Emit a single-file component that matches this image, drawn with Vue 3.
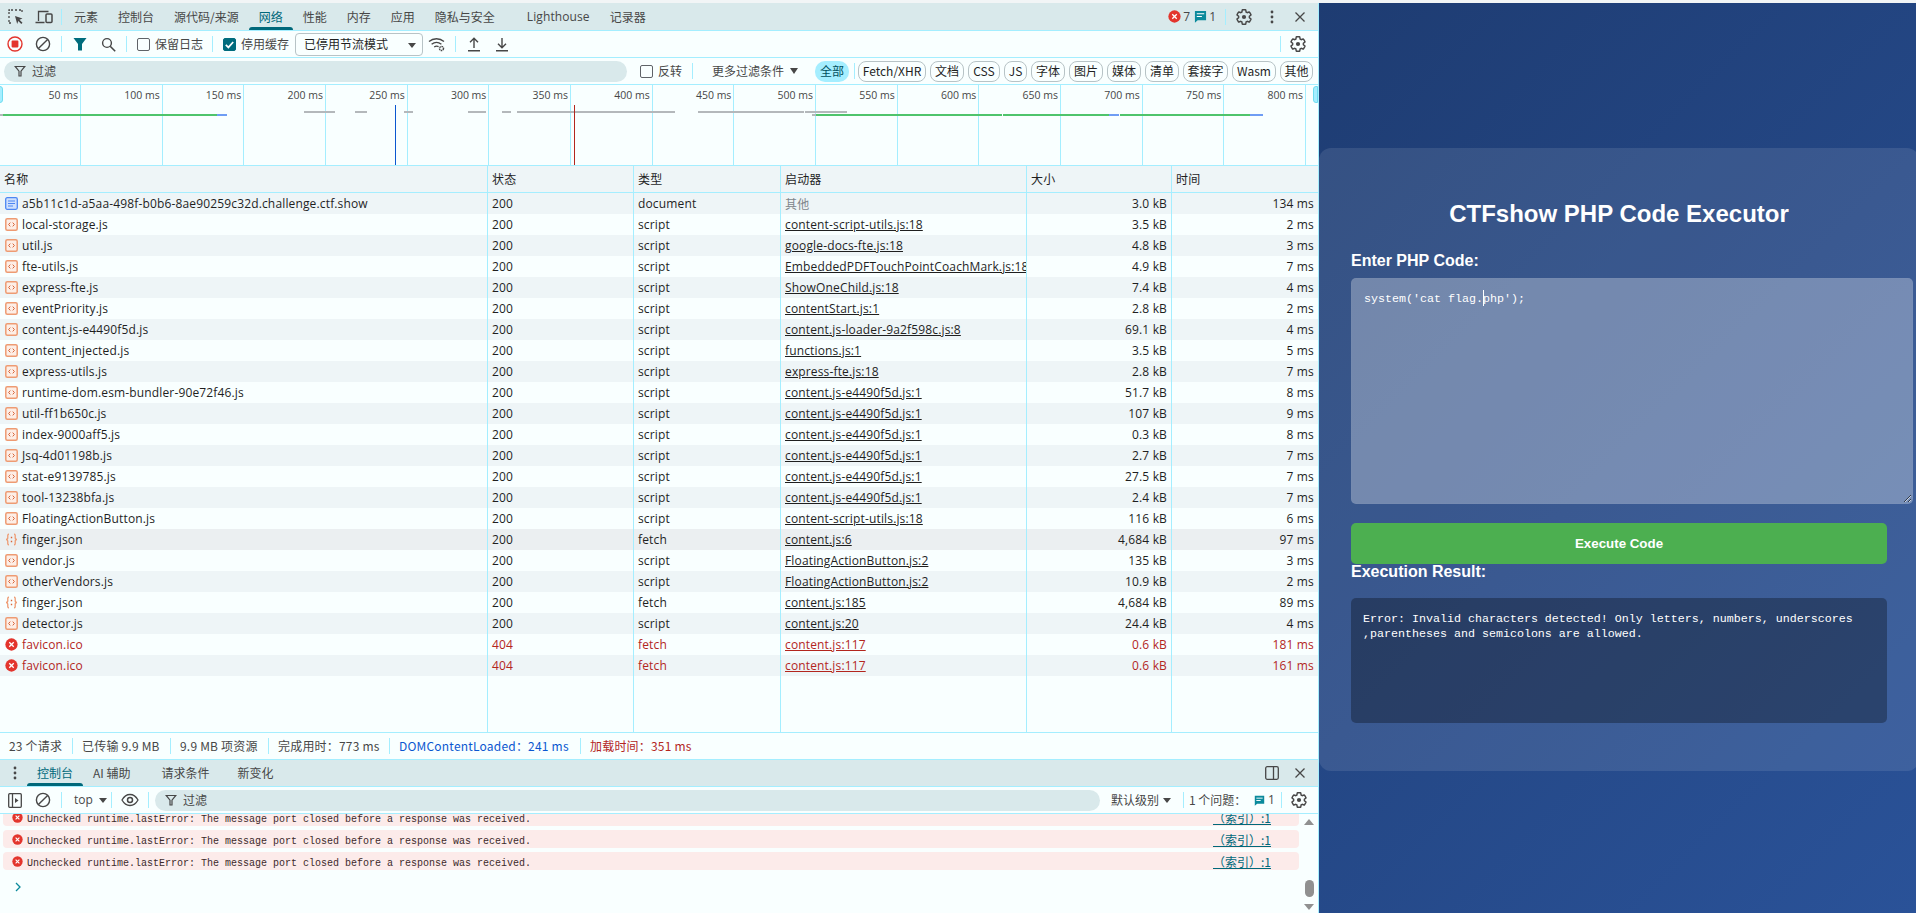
<script setup>
const tabs = ['元素', '控制台', '源代码/来源', '网络', '性能', '内存', '应用', '隐私与安全', 'Lighthouse', '记录器']
const chips = [
  ['Fetch/XHR', 68], ['文档', 34], ['CSS', 32], ['JS', 23], ['字体', 34], ['图片', 34],
  ['媒体', 34], ['清单', 34], ['套接字', 45], ['Wasm', 44], ['其他', 33]
]
const ticks = Array.from({ length: 16 }, (_, i) => ({ x: 80 + i * 81.67, label: `${(i + 1) * 50} ms` }))
const bars = [
  [304, 31, 111, 'g'], [355, 12, 111, 'g'], [404, 9, 111, 'g'], [468, 18, 111, 'g'], [502, 9, 111, 'g'],
  [517, 158, 111, 'g'], [698, 106, 111, 'g'], [805, 42, 111, 'g'],
  [0, 3, 114, 'g'], [3, 214, 114, 'e'], [217, 10, 114, 'b'],
  [812, 4, 114, 'g'], [816, 186, 114, 'e'], [1003, 106, 114, 'e'], [1109, 10, 114, 'b'],
  [1120, 130, 114, 'e'], [1250, 13, 114, 'b']
]
const I = 'content.js-e4490f5d.js:1'
const rows = [
  ['a5b11c1d-a5aa-498f-b0b6-8ae90259c32d.challenge.ctf.show', 'doc', '200', 'document', '其他', '3.0 kB', '134 ms'],
  ['local-storage.js', 'js', '200', 'script', 'content-script-utils.js:18', '3.5 kB', '2 ms'],
  ['util.js', 'js', '200', 'script', 'google-docs-fte.js:18', '4.8 kB', '3 ms'],
  ['fte-utils.js', 'js', '200', 'script', 'EmbeddedPDFTouchPointCoachMark.js:18', '4.9 kB', '7 ms'],
  ['express-fte.js', 'js', '200', 'script', 'ShowOneChild.js:18', '7.4 kB', '4 ms'],
  ['eventPriority.js', 'js', '200', 'script', 'contentStart.js:1', '2.8 kB', '2 ms'],
  ['content.js-e4490f5d.js', 'js', '200', 'script', 'content.js-loader-9a2f598c.js:8', '69.1 kB', '4 ms'],
  ['content_injected.js', 'js', '200', 'script', 'functions.js:1', '3.5 kB', '5 ms'],
  ['express-utils.js', 'js', '200', 'script', 'express-fte.js:18', '2.8 kB', '7 ms'],
  ['runtime-dom.esm-bundler-90e72f46.js', 'js', '200', 'script', I, '51.7 kB', '8 ms'],
  ['util-ff1b650c.js', 'js', '200', 'script', I, '107 kB', '9 ms'],
  ['index-9000aff5.js', 'js', '200', 'script', I, '0.3 kB', '8 ms'],
  ['Jsq-4d01198b.js', 'js', '200', 'script', I, '2.7 kB', '7 ms'],
  ['stat-e9139785.js', 'js', '200', 'script', I, '27.5 kB', '7 ms'],
  ['tool-13238bfa.js', 'js', '200', 'script', I, '2.4 kB', '7 ms'],
  ['FloatingActionButton.js', 'js', '200', 'script', 'content-script-utils.js:18', '116 kB', '6 ms'],
  ['finger.json', 'json', '200', 'fetch', 'content.js:6', '4,684 kB', '97 ms'],
  ['vendor.js', 'js', '200', 'script', 'FloatingActionButton.js:2', '135 kB', '3 ms'],
  ['otherVendors.js', 'js', '200', 'script', 'FloatingActionButton.js:2', '10.9 kB', '2 ms'],
  ['finger.json', 'json', '200', 'fetch', 'content.js:185', '4,684 kB', '89 ms'],
  ['detector.js', 'js', '200', 'script', 'content.js:20', '24.4 kB', '4 ms'],
  ['favicon.ico', 'err', '404', 'fetch', 'content.js:117', '0.6 kB', '181 ms'],
  ['favicon.ico', 'err', '404', 'fetch', 'content.js:117', '0.6 kB', '161 ms']
]
const heads = ['名称', '状态', '类型', '启动器', '大小', '时间']
const stats = [['23 个请求', 54, ''], ['已传输 9.9 MB', 79, ''], ['9.9 MB 项资源', 79, ''], ['完成用时：773 ms', 102, ''], ['DOMContentLoaded：241 ms', 172, 'dom'], ['加载时间：351 ms', 102, 'load']]
const logs = [1, 2, 3]
const gear = 'M19.14 12.94c.04-.3.06-.61.06-.94 0-.32-.02-.64-.07-.94l2.03-1.58c.18-.14.23-.41.12-.61l-1.92-3.32c-.12-.22-.37-.29-.59-.22l-2.39.96c-.5-.38-1.03-.7-1.62-.94l-.36-2.54c-.04-.24-.24-.41-.48-.41h-3.84c-.24 0-.43.17-.47.41l-.36 2.54c-.59.24-1.13.57-1.62.94l-2.39-.96c-.22-.08-.47 0-.59.22L2.74 8.87c-.12.21-.08.47.12.61l2.03 1.58c-.05.3-.09.63-.09.94s.02.64.07.94l-2.03 1.58c-.18.14-.23.41-.12.61l1.92 3.32c.12.22.37.29.59.22l2.39-.96c.5.38 1.03.7 1.62.94l.36 2.54c.05.24.24.41.48.41h3.84c.24 0 .44-.17.47-.41l.36-2.54c.59-.24 1.13-.56 1.62-.94l2.39.96c.22.08.47 0 .59-.22l1.92-3.32c.12-.22.07-.47-.12-.61l-2.01-1.58z'
</script>

<template>
  <div class="screen">
    <svg class="defs">
      <symbol id="gear" viewBox="0 0 24 24">
        <path :d="gear" fill="none" stroke="#474747" stroke-width="1.9" />
        <circle cx="12" cy="12" r="2.8" fill="#474747" />
      </symbol>
      <symbol id="close" viewBox="0 0 12 12">
        <path d="M1.5 1.5l9 9M10.5 1.5l-9 9" stroke="#474747" stroke-width="1.3" fill="none" />
      </symbol>
      <symbol id="err" viewBox="0 0 14 14">
        <circle cx="7" cy="7" r="6.6" fill="#e3352d" />
        <path d="M4.6 4.6l4.8 4.8M9.4 4.6l-4.8 4.8" stroke="#fff" stroke-width="1.4" />
      </symbol>
      <symbol id="msg" viewBox="0 0 14 14">
        <path d="M1 1h12v10H4l-3 2.6z" fill="#0b8a9c" />
        <path d="M3 4h8M3 7h5.5" stroke="#fff" stroke-width="1.2" />
      </symbol>
      <symbol id="clear" viewBox="0 0 16 16">
        <circle cx="8" cy="8" r="6.6" fill="none" stroke="#474747" stroke-width="1.4" />
        <path d="M12.6 3.4l-9.2 9.2" stroke="#474747" stroke-width="1.4" />
      </symbol>
      <symbol id="funnel" viewBox="0 0 12 12">
        <path d="M1.2 1.5h9.6L7 6.2V11H5V6.2z" fill="none" stroke="#474747" stroke-width="1.2" />
      </symbol>
    </svg>

    <div class="strip"></div>
    <div class="main">
      <section class="devtools">
        <header class="tabbar">
          <button class="ib first" aria-label="inspect">
            <svg width="16" height="16" viewBox="0 0 16 16">
              <path d="M1 5V1h4M7 1h2M11 1h3v3M1 7v2M1 11v3h3" fill="none" stroke="#474747" stroke-width="1.3" stroke-dasharray="2 1" />
              <path d="M7 7l7.5 2.6-3 1.1 3 3-1.2 1.2-3-3-1.1 3z" fill="#474747" />
            </svg>
          </button>
          <button class="ib device" aria-label="device">
            <svg width="18" height="16" viewBox="0 0 18 16">
              <path d="M3.5 12V2.5h10M0.5 13.5h9" fill="none" stroke="#474747" stroke-width="1.3" />
              <rect x="11" y="5" width="6" height="8.5" rx="1" fill="none" stroke="#474747" stroke-width="1.5" />
            </svg>
          </button>
          <span class="sep tabsep"></span>
          <span v-for="t in tabs" :key="t" class="tab" :class="{ active: t === '网络', spaced: t === 'Lighthouse' }">{{ t }}</span>
          <div class="tabright">
            <svg class="i12" width="13" height="13"><use href="#err" /></svg>
            <span class="count">7</span>
            <svg class="i12 msgi" width="13" height="13"><use href="#msg" /></svg>
            <span class="count">1</span>
            <span class="sep badge-sep"></span>
            <svg class="gear" width="18" height="18"><use href="#gear" /></svg>
            <svg class="dots" width="4" height="14" viewBox="0 0 4 14">
              <circle cx="2" cy="2" r="1.4" fill="#474747" /><circle cx="2" cy="7" r="1.4" fill="#474747" /><circle cx="2" cy="12" r="1.4" fill="#474747" />
            </svg>
            <svg class="closei" width="12" height="12"><use href="#close" /></svg>
          </div>
        </header>

        <div class="bar">
          <button class="ib" aria-label="record">
            <svg width="16" height="16" viewBox="0 0 16 16">
              <circle cx="8" cy="8" r="7" fill="none" stroke="#e3352d" stroke-width="1.4" />
              <rect x="4.6" y="4.6" width="6.8" height="6.8" rx=".8" fill="#e3352d" />
            </svg>
          </button>
          <button class="ib" aria-label="clear"><svg width="16" height="16"><use href="#clear" /></svg></button>
          <span class="sep"></span>
          <button class="ib" aria-label="filter">
            <svg width="14" height="14" viewBox="0 0 14 14"><path d="M.5 1h13L9 7v6.5H5V7z" fill="#006c7d" /></svg>
          </button>
          <button class="ib" aria-label="search">
            <svg width="15" height="15" viewBox="0 0 15 15">
              <circle cx="6" cy="6" r="4.4" fill="none" stroke="#474747" stroke-width="1.4" />
              <path d="M9.2 9.2l5 5" stroke="#474747" stroke-width="1.6" />
            </svg>
          </button>
          <span class="sep"></span>
          <label class="check cj"><span class="box"></span>保留日志</label>
          <span class="sep"></span>
          <label class="check cj"><span class="box on">
            <svg width="13" height="13" viewBox="0 0 13 13"><path d="M2.8 6.8l2.6 2.6 4.8-5.4" fill="none" stroke="#fff" stroke-width="1.7" /></svg>
          </span>停用缓存</label>
          <div class="select cj">已停用节流模式<span class="caret"></span></div>
          <button class="ib" aria-label="network conditions">
            <svg width="18" height="16" viewBox="0 0 18 16">
              <path d="M1 5.5C5.2 1.8 11.8 1.8 16 5.5M3.6 8.3c3-2.4 6.8-2.4 9.8 0M6.2 11c1.4-1 3-1.1 4.4-.4" fill="none" stroke="#474747" stroke-width="1.3" />
              <circle cx="13.5" cy="12.5" r="2" fill="none" stroke="#474747" stroke-width="1.5" stroke-dasharray="1.5 .6" />
            </svg>
          </button>
          <span class="sep"></span>
          <button class="ib" aria-label="import">
            <svg width="14" height="15" viewBox="0 0 14 15"><path d="M7 11V1.5M3 5.2l4-4 4 4M1 13.8h12" fill="none" stroke="#474747" stroke-width="1.4" /></svg>
          </button>
          <button class="ib" aria-label="export">
            <svg width="14" height="15" viewBox="0 0 14 15"><path d="M7 1v9.5M3 6.8l4 4 4-4M1 13.8h12" fill="none" stroke="#474747" stroke-width="1.4" /></svg>
          </button>
          <span class="sep push"></span>
          <button class="ib endgear" aria-label="settings"><svg width="18" height="18"><use href="#gear" /></svg></button>
        </div>

        <div class="bar filterbar">
          <div class="pill">
            <svg width="12" height="12"><use href="#funnel" /></svg>
            <span class="cj">过滤</span>
          </div>
          <label class="check cj invert"><span class="box"></span>反转</label>
          <span class="sep invsep"></span>
          <span class="more cj">更多过滤条件<span class="tri"></span></span>
          <span class="chip all cj">全部</span>
          <span class="sep chipsep"></span>
          <span v-for="c in chips" :key="c[0]" class="chip cj" :style="{ width: c[1] + 'px' }">{{ c[0] }}</span>
        </div>

        <div class="overview">
          <template v-for="t in ticks" :key="t.x">
            <i class="gridline" :style="{ left: t.x + 'px' }"></i>
            <span class="ticklabel" :style="{ left: t.x - 62 + 'px' }">{{ t.label }}</span>
          </template>
          <i v-for="(b, i) in bars" :key="i" class="ovbar" :class="b[3]" :style="{ left: b[0] + 'px', width: b[1] + 'px', top: b[2] - 85 + 'px' }"></i>
          <i class="vline blue"></i>
          <i class="vline red"></i>
          <i class="handle left"></i>
          <i class="handle right"></i>
        </div>

        <div class="grid head">
          <div v-for="h in heads" :key="h" class="cell cj">{{ h }}</div>
        </div>
        <div class="list">
          <div v-for="(r, i) in rows" :key="i" class="grid row" :class="{ alt: i % 2 === 0, failed: r[1] === 'err', hover: i === 16 }">
            <div class="cell name">
              <svg v-if="r[1] === 'doc'" class="ficon" width="13" height="13" viewBox="0 0 13 13">
                <rect x=".7" y=".7" width="11.6" height="11.6" rx="1.5" fill="#cfe0fd" stroke="#4d86f2" stroke-width="1.3" />
                <path d="M3 4h7M3 6.5h7M3 9h5" stroke="#4d86f2" stroke-width="1.1" />
              </svg>
              <svg v-else-if="r[1] === 'js'" class="ficon" width="13" height="13" viewBox="0 0 13 13">
                <rect x=".8" y=".8" width="11.4" height="11.4" rx="1.5" fill="#fdeee6" stroke="#ee9b73" stroke-width="1.5" />
                <path d="M5.3 4.6L3.6 6.5l1.7 1.9M7.7 4.6l1.7 1.9-1.7 1.9" fill="none" stroke="#d9663a" stroke-width="1" />
              </svg>
              <svg v-else-if="r[1] === 'json'" class="ficon" width="13" height="13" viewBox="0 0 13 13">
                <path d="M4 1.2C2.4 1.2 2.8 3 2.8 4.500 2.800 5.600 2 6.500 1 6.500c1 0 1.800.9 1.800 2 0 1.500-.4 3.300 1.200 3.300M9 1.200c1.600 0 1.200 1.800 1.200 3.300 0 1.100.8 2 1.800 2-1 0-1.800.9-1.800 2 0 1.500.4 3.300-1.200 3.300" fill="none" stroke="#ee9b73" stroke-width="1.300" />
                <path d="M6.500 3.800v1.500M6.500 7.700v1.500" stroke="#d9663a" stroke-width="1.400" />
              </svg>
              <svg v-else class="ficon" width="13" height="13"><use href="#err" /></svg>
              <span>{{ r[0] }}</span>
            </div>
            <div class="cell">{{ r[2] }}</div>
            <div class="cell">{{ r[3] }}</div>
            <div class="cell init" :class="{ other: r[4] === '其他', cj: r[4] === '其他' }">{{ r[4] }}</div>
            <div class="cell num">{{ r[5] }}</div>
            <div class="cell num">{{ r[6] }}</div>
          </div>
          <div class="grid filler"><div v-for="h in heads" :key="h" class="cell"></div></div>
        </div>

        <div class="status cj">
          <template v-for="(s, i) in stats" :key="s[0]">
            <span v-if="i" class="sep"></span>
            <span class="stat" :class="s[2]" :style="{ width: s[1] + 'px' }">{{ s[0] }}</span>
          </template>
        </div>

        <div class="ctabs cj">
          <button class="ib" aria-label="more">
            <svg width="4" height="14" viewBox="0 0 4 14">
              <circle cx="2" cy="2" r="1.4" fill="#474747" /><circle cx="2" cy="7" r="1.4" fill="#474747" /><circle cx="2" cy="12" r="1.4" fill="#474747" />
            </svg>
          </button>
          <span class="tab active">控制台</span>
          <span class="tab">AI 辅助</span>
          <span class="tab">请求条件</span>
          <span class="tab">新变化</span>
          <svg class="cpanel" width="14" height="14" viewBox="0 0 14 14">
            <rect x=".7" y=".7" width="12.600" height="12.600" rx="1.500" fill="none" stroke="#474747" stroke-width="1.300" />
            <path d="M8.500 1v12" stroke="#474747" stroke-width="1.300" />
          </svg>
          <svg class="closei" width="12" height="12"><use href="#close" /></svg>
        </div>

        <div class="bar ctool cj">
          <button class="ib" aria-label="sidebar">
            <svg width="14" height="15" viewBox="0 0 14 15">
              <rect x=".7" y=".7" width="12.600" height="13.600" rx="1" fill="none" stroke="#474747" stroke-width="1.300" />
              <path d="M4.500 1v13" stroke="#474747" stroke-width="1.300" /><path d="M7 5l3.500 2.500L7 10z" fill="#474747" />
            </svg>
          </button>
          <button class="ib" aria-label="clear"><svg width="16" height="16"><use href="#clear" /></svg></button>
          <span class="sep"></span>
          <span class="ctx">top<span class="tri small"></span></span>
          <span class="sep"></span>
          <button class="ib eye" aria-label="live expression">
            <svg width="18" height="14" viewBox="0 0 18 14">
              <path d="M1 7c2-3.600 4.800-5.500 8-5.500s6 1.900 8 5.500c-2 3.600-4.800 5.500-8 5.500S3 10.600 1 7z" fill="none" stroke="#474747" stroke-width="1.300" />
              <circle cx="9" cy="7" r="2.500" fill="none" stroke="#474747" stroke-width="1.500" />
            </svg>
          </button>
          <span class="sep"></span>
          <div class="pill cpill">
            <svg width="12" height="12"><use href="#funnel" /></svg>
            <span>过滤</span>
          </div>
          <span class="level">默认级别<span class="tri small"></span></span>
          <span class="sep lvsep"></span>
          <span class="issues">1 个问题：</span>
          <svg class="i12 imsg" width="11" height="11"><use href="#msg" /></svg>
          <span class="count">1</span>
          <span class="sep issep"></span>
          <svg class="gear" width="18" height="18"><use href="#gear" /></svg>
        </div>

        <div class="console">
          <div class="logs">
            <div v-for="l in logs" :key="l" class="log">
              <svg width="11" height="11"><use href="#err" /></svg>
              <span class="logtext">Unchecked runtime.lastError: The message port closed before a response was received.</span>
              <a class="src cj">（索引）:1</a>
            </div>
            <svg class="prompt" width="8" height="10" viewBox="0 0 8 10"><path d="M2 1l4 4-4 4" fill="none" stroke="#0b8a9c" stroke-width="1.300" /></svg>
          </div>
          <div class="scroll">
            <i class="arrow up"></i>
            <i class="thumb"></i>
            <i class="arrow down"></i>
          </div>
        </div>
      </section>

      <section class="page">
        <div class="card">
          <h1>CTFshow PHP Code Executor</h1>
          <label class="lbl" for="code">Enter PHP Code:</label>
          <div class="editor">
            <textarea id="code" class="code" spellcheck="false">system('cat flag.php');</textarea>
            <i class="cursor"></i>
          </div>
          <button class="run">Execute Code</button>
          <h3 class="lbl result-title">Execution Result:</h3>
          <div class="result">Error: Invalid characters detected! Only letters, numbers, underscores ,parentheses and semicolons are allowed.</div>
        </div>
      </section>
    </div>
  </div>
</template>

<style>
html, body { margin: 0; overflow: hidden; }
</style>

<style scoped>
.screen { width: 1916px; height: 913px; overflow: hidden; font: 12px/16px "Open Sans", "Noto Sans CJK SC", sans-serif; color: #1f1f1f; }
.defs { display: none; }
.strip { height: 3px; background: #f2f5f6; }
.main { display: flex; height: 910px; }
button { border: 0; background: none; padding: 0; font: inherit; color: inherit; }
.cj { font-family: "Noto Sans CJK SC", "Open Sans", sans-serif; }

.devtools { width: 1319px; height: 910px; flex: none; box-sizing: border-box; border-right: 1px solid #a5eeff; background: #f9ffff; display: flex; flex-direction: column; }
.ib { width: 28px; height: 26px; flex: none; display: flex; align-items: center; justify-content: center; }
.sep { width: 1px; height: 16px; background: #a5eeff; margin: 0 4px; flex: none; }

.tabbar { height: 28px; flex: none; box-sizing: border-box; border-bottom: 1px solid #a5eeff; background: #d9e9eb; display: flex; align-items: stretch; font-family: "Noto Sans CJK SC", "Open Sans", sans-serif; color: #474747; }
.tabbar .ib { align-self: center; }
.tabbar .first { width: 29px; margin-left: 1px; }
.tabbar .device { width: 27px; }
.tabsep { align-self: center; margin: 0 2px 0 4px; }
.tab { padding: 0 10px; display: flex; align-items: center; position: relative; white-space: nowrap; }
.tab.spaced { margin-left: 12px; font-family: "Open Sans", sans-serif; letter-spacing: .1px; }
.tab.active { color: #00687a; }
.tab.active::after { content: ""; position: absolute; left: 0; right: 0; bottom: 0; height: 3px; border-radius: 3px 3px 0 0; background: #00687a; }
.tabright { margin-left: auto; display: flex; align-items: center; }
.i12 { flex: none; }
.count { margin-left: 2px; font-family: "Open Sans", sans-serif; color: #474747; }
.msgi { margin-left: 4px; }
.badge-sep { margin: 0 9px; }
.dots { margin-left: 17px; }
.closei { margin: 0 12px 0 20px; }

.bar { height: 27px; flex: none; box-sizing: border-box; border-bottom: 1px solid #a5eeff; display: flex; align-items: center; padding-left: 1px; }
.check { display: flex; align-items: center; gap: 5px; margin: 0 5px 0 6px; color: #474747; line-height: 16px; }
.box { width: 13px; height: 13px; box-sizing: border-box; border: 1px solid #5f6368; border-radius: 2px; flex: none; display: block; }
.box.on { background: #006c7d; border-color: #006c7d; }
.box.on svg { display: block; margin: -1px; }
.select { width: 128px; height: 23px; box-sizing: border-box; margin-left: 1px; padding-left: 8px; border: 1px solid #b7c3c6; border-radius: 4px; display: flex; align-items: center; position: relative; color: #1f1f1f; }
.caret { position: absolute; right: 6px; top: 9px; border: 4px solid transparent; border-top: 5px solid #474747; border-bottom: 0; }
.push { margin-left: auto; margin-right: 3px; }
.endgear { margin-right: 6px; }

.filterbar { padding-left: 4px; }
.pill { height: 21px; border-radius: 11px; background: #d9e9eb; display: flex; align-items: center; gap: 6px; box-sizing: border-box; color: #474747; }
.filterbar .pill { width: 623px; padding-left: 10px; }
.invert { margin: 0 0 0 13px; }
.invsep { margin: 0 19px 0 10px; }
.more { color: #474747; display: flex; align-items: center; width: 103px; flex: none; }
.tri { display: inline-block; border: 4px solid transparent; border-top: 6px solid #474747; border-bottom: 0; margin-left: 6px; }
.tri.small { margin-left: 6px; border-width: 5px 4px 0; border-top-color: #474747; }
.chip { height: 21px; box-sizing: border-box; border: 1px solid #b7c3c6; border-radius: 8px; display: flex; align-items: center; justify-content: center; margin-right: 4px; flex: none; white-space: nowrap; color: #1f1f1f; }
.chip.all { width: 34px; margin-right: 0; border: 0; background: #a5eeff; border-radius: 10px; color: #00505e; }
.chipsep { margin: 0 3px 0 5px; }

.overview { height: 81px; flex: none; box-sizing: border-box; border-bottom: 1px solid #a5eeff; position: relative; overflow: hidden; }
.gridline { position: absolute; top: 0; bottom: 0; width: 1px; background: #a5eeff; }
.ticklabel { position: absolute; top: 2px; width: 60px; text-align: right; font-size: 10.5px; line-height: 16px; color: #474747; }
.ovbar { position: absolute; height: 2px; }
.ovbar.g { background: #b4b8bb; }
.ovbar.e { background: #4fc46c; }
.ovbar.b { background: #6f9df4; }
.vline { position: absolute; top: 20px; bottom: 0; width: 1px; }
.vline.blue { left: 395px; background: #0b57d0; }
.vline.red { left: 574px; background: #b3261e; }
.handle { position: absolute; top: 1px; height: 17px; width: 5px; background: #a5eeff; border: 1px solid #6fdcf0; box-sizing: border-box; }
.handle.left { left: -2px; border-radius: 0 3px 3px 0; }
.handle.right { left: 1313px; border-radius: 3px 0 0 3px; }

.grid { display: grid; grid-template-columns: 487px 146px 147px 246px 145px 147px; flex: none; }
.cell { box-sizing: border-box; padding: 0 4px; border-left: 1px solid #a5eeff; overflow: hidden; white-space: nowrap; display: flex; align-items: center; letter-spacing: .15px; }
.cell:first-child { border-left: 0; padding-left: 4px; }
.head { height: 27px; box-sizing: border-box; border-bottom: 1px solid #a5eeff; background: #eef5f7; }
.list { flex: 1; display: flex; flex-direction: column; min-height: 0; }
.row { height: 21px; }
.row.alt { background: #eef5f7; }
.row.hover { background: #ebeff1; }
.row.failed { color: #b3261e; }
.name { padding-left: 5px !important; gap: 4px; }
.ficon { flex: none; }
.init { display: block; line-height: 21px; text-decoration: underline; }
.init.other { text-decoration: none; color: #80868b; }
.num { justify-content: flex-end; }
.filler { flex: 1; }

.status { height: 28px; flex: none; box-sizing: border-box; border-top: 1px solid #a5eeff; border-bottom: 1px solid #a5eeff; display: flex; align-items: center; padding-left: 9px; color: #474747; white-space: nowrap; }
.status .sep { margin: 0 9px; }
.stat { flex: none; letter-spacing: .2px; }
.dom { color: #0b57d0; }
.load { color: #b3261e; }

.ctabs { height: 27px; flex: none; box-sizing: border-box; border-bottom: 1px solid #a5eeff; background: #d9e9eb; display: flex; align-items: stretch; color: #474747; padding-left: 1px; }
.ctabs .ib { align-self: center; margin-right: -2px; }
.ctabs .tab:nth-of-type(3) { margin-left: 11px; }
.ctabs .tab:nth-of-type(4) { margin-left: 8px; }
.cpanel { align-self: center; margin-left: auto; }
.ctabs .closei { align-self: center; margin: 0 12px 0 15px; }

.ctool { color: #474747; }
.ctx { width: 33px; margin-left: 8px; display: flex; align-items: center; font-family: "Open Sans", sans-serif; flex: none; }
.eye { width: 28px; }
.cpill { width: 945px; margin-left: 2px; padding-left: 10px; flex: none; }
.level { display: flex; align-items: center; margin-left: 11px; white-space: nowrap; width: 61px; flex: none; }
.level .tri { margin-left: 4px; }
.lvsep { margin: 0 5px 0 11px; }
.issues { white-space: nowrap; width: 64px; flex: none; }
.imsg { margin-left: 1px; }
.ctool .count { margin-left: 3px; }
.issep { margin: 0 8px 0 6px; }

.console { height: 99px; flex: none; display: flex; overflow: hidden; }
.logs { width: 1299px; flex: none; padding-left: 3px; box-sizing: border-box; margin-top: -6px; }
.log { height: 18px; margin-top: 4px; background: #fcebea; border-radius: 4px; display: flex; align-items: center; padding-left: 9px; color: #3c2a2a; }
.log:first-child { margin-top: 0; }
.logtext { margin-left: 4px; padding-top: 5px; font: 10px/18px "Liberation Mono", monospace; white-space: nowrap; }
.src { margin-left: auto; margin-right: 28px; padding-top: 2px; color: #00687a; text-decoration: underline; line-height: 18px; white-space: nowrap; font-size: 12px; }
.prompt { display: block; margin: 12px 0 0 11px; }
.scroll { flex: 1; position: relative; }
.arrow { position: absolute; left: 5px; border: 5px solid transparent; }
.arrow.up { top: 5px; border-bottom: 6px solid #909090; border-top: 0; }
.arrow.down { top: 90px; border-top: 6px solid #909090; border-bottom: 0; }
.thumb { position: absolute; left: 6px; top: 66px; width: 9px; height: 17px; border-radius: 5px; background: #909090; }

.page { flex: 1; min-width: 0; overflow: hidden; background: linear-gradient(135deg, #1e3c72, #2a5298); padding-top: 145px; box-sizing: border-box; }
.card { width: 600px; height: 623px; box-sizing: border-box; padding: 32px; background: rgba(255, 255, 255, .1); border-radius: 12px; font-family: "Liberation Sans", Arial, sans-serif; color: #fff; }
h1 { margin: 20px 0 0; text-align: center; font-size: 24px; line-height: 28px; font-weight: 700; }
.lbl { display: block; margin: 0; font-size: 16px; line-height: 18px; font-weight: 700; }
.card > label.lbl { margin-top: 24px; }
.editor { position: relative; margin-top: 8px; height: 226px; }
.code { display: block; width: 100%; height: 200px; padding: 12px; border: 1px solid rgba(255, 255, 255, .02); border-radius: 5px; background: rgba(255, 255, 255, .3); color: #fff; font: 11.67px/17px "Liberation Mono", monospace; resize: vertical; outline: 0; }
.cursor { position: absolute; left: 132px; top: 12px; width: 1px; height: 16px; background: #fff; }
.run { display: block; width: 100%; height: 41px; margin-top: 19px; border-radius: 5px; background: #4caf50; color: #fff; font: 700 13.33px/41px "Liberation Sans", Arial, sans-serif; }
.result-title { margin-top: -1px; line-height: 18px; padding-top: 0; }
.result { height: 125px; box-sizing: border-box; margin-top: 17px; padding: 14px 12px; background: rgba(0, 0, 0, .3); border-radius: 5px; font: 11.67px/15px "Liberation Mono", monospace; color: #fff; }
</style>
